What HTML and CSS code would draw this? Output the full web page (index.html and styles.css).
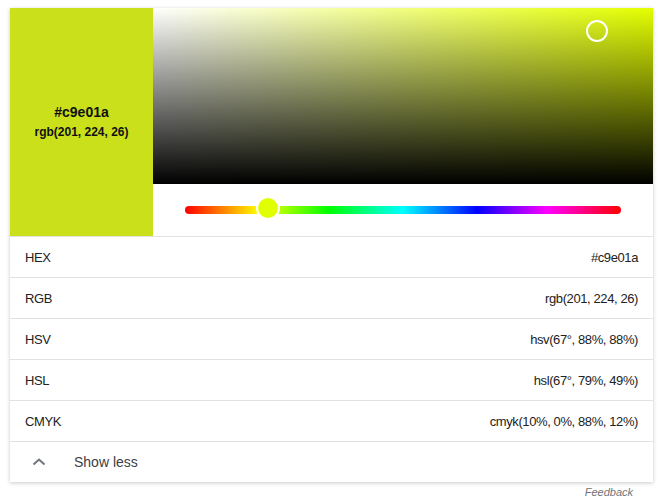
FILE: index.html
```html
<!DOCTYPE html>
<html>
<head>
<meta charset="utf-8">
<link rel="stylesheet" href="styles.css">
</head>
<body>
<div class="card">
  <div class="top">
    <div class="swatch">
      <div class="hex">#c9e01a</div>
      <div class="rgb">rgb(201, 224, 26)</div>
    </div>
    <div class="picker">
      <div class="sv">
        <div class="cursor"></div>
      </div>
      <div class="hue-area">
        <div class="track">
          <div class="thumb"></div>
        </div>
      </div>
    </div>
  </div>
  <div class="row"><span>HEX</span><span>#c9e01a</span></div>
  <div class="row"><span>RGB</span><span>rgb(201, 224, 26)</span></div>
  <div class="row"><span>HSV</span><span>hsv(67°, 88%, 88%)</span></div>
  <div class="row"><span>HSL</span><span>hsl(67°, 79%, 49%)</span></div>
  <div class="row"><span>CMYK</span><span>cmyk(10%, 0%, 88%, 12%)</span></div>
  <div class="less">
    <svg class="chev" width="14" height="10" viewBox="0 0 14 10"><path d="M1.5 7.5 L7 2.5 L12.5 7.5" fill="none" stroke="#70757a" stroke-width="2"/></svg>
    <span>Show less</span>
  </div>
</div>
<div class="feedback">Feedback</div>
</body>
</html>
```
FILE: styles.css
```css
html, body { margin: 0; padding: 0; background: #fff; }
body {
  padding: 8px 9px 0 10px;
  font-family: "Liberation Sans", Arial, sans-serif;
  color: #222;
}
.card {
  width: 643px;
  background: #fff;
  box-shadow: 0 1px 4px rgba(0,0,0,0.22);
}
.top { display: flex; height: 228px; }
.swatch {
  width: 143px;
  background: #c9e01a;
  display: flex;
  flex-direction: column;
  align-items: center;
  justify-content: center;
  color: #111;
  font-weight: bold;
}
.hex { font-size: 14px; line-height: 18px; margin-top: 0; }
.rgb { font-size: 12px; line-height: 18px; margin-top: 2px; }
.picker { flex: 1; display: flex; flex-direction: column; }
.sv {
  position: relative;
  height: 176px;
  background: linear-gradient(to top, #000, rgba(0,0,0,0)), linear-gradient(to right, #fff, #e4ff00);
}
.cursor {
  position: absolute;
  left: 433px;
  top: 12px;
  width: 18px;
  height: 18px;
  border: 2px solid #fff;
  border-radius: 50%;
  box-sizing: content-box;
}
.hue-area { flex: 1; display: flex; align-items: center; padding: 0 32px; }
.track {
  position: relative;
  flex: 1;
  height: 8px;
  border-radius: 4px;
  background: linear-gradient(to right, #f00 0%, #ff0 17%, #0f0 33%, #0ff 50%, #00f 67%, #f0f 83%, #f00 100%);
}
.thumb {
  position: absolute;
  left: 73px;
  top: -8px;
  width: 20px;
  height: 20px;
  border-radius: 50%;
  background: #e0ff00;
  border: 2px solid #fff;
  margin-left: -2px;
  margin-top: -2px;
}
.row {
  display: flex;
  justify-content: space-between;
  align-items: center;
  height: 40px;
  border-top: 1px solid #e2e2e2;
  padding: 0 15px;
  font-size: 13px;
  letter-spacing: -0.4px;
}
.less {
  display: flex;
  align-items: center;
  height: 40px;
  border-top: 1px solid #e2e2e2;
  padding-left: 22px;
  font-size: 14px;
  color: #3c4043;
}
.chev { margin-right: 28px; margin-top: -1px; }
.feedback {
  width: 623px;
  text-align: right;
  font-size: 11px;
  font-style: italic;
  color: #70757a;
  margin-top: 4px;
}
```
